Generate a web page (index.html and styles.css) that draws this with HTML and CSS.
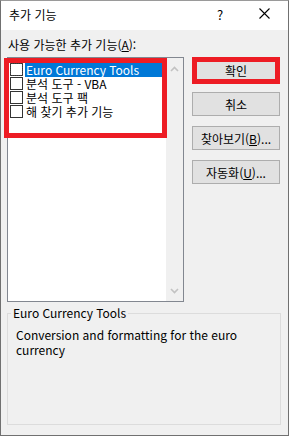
FILE: index.html
```html
<!DOCTYPE html>
<html lang="ko">
<head>
  <meta charset="UTF-8">
  <title>추가 기능</title>
  <link rel="stylesheet" href="styles.css">
</head>
<body>
  <div class="window">
    <div class="titlebar">
      <span class="title">추가 기능</span>
      <span class="help">?</span>
      <svg class="close" width="11" height="11" viewBox="0 0 11 11">
        <path d="M0.5 0.5 L10.5 10.5 M10.5 0.5 L0.5 10.5" stroke="#000" stroke-width="1.1" fill="none"/>
      </svg>
    </div>

    <div class="client">
      <div class="label">사용 가능한 추가 기능(<u>A</u>):</div>

      <div class="top-row">
        <div class="listbox">
          <ul class="items">
            <li class="item selected"><span class="check focus"></span><span class="text">Euro Currency Tools</span></li>
            <li class="item"><span class="check"></span><span class="text">분석 도구 - VBA</span></li>
            <li class="item"><span class="check"></span><span class="text">분석 도구 팩</span></li>
            <li class="item"><span class="check"></span><span class="text">해 찾기 추가 기능</span></li>
          </ul>
          <div class="scrollbar">
            <svg width="9" height="6" viewBox="0 0 9 6"><path d="M1 5 L4.5 1.5 L8 5" stroke="#c2c2c2" stroke-width="1.6" fill="none"/></svg>
            <svg width="9" height="6" viewBox="0 0 9 6"><path d="M1 1 L4.5 4.5 L8 1" stroke="#c2c2c2" stroke-width="1.6" fill="none"/></svg>
          </div>
          <div class="mark mark-list"></div>
        </div>

        <div class="buttons">
          <button class="btn btn-ok">확인</button>
          <button class="btn">취소</button>
          <button class="btn">찾아보기(<u>B</u>)...</button>
          <button class="btn">자동화(<u>U</u>)...</button>
        </div>
      </div>

      <fieldset class="group">
        <legend>Euro Currency Tools</legend>
        <p class="desc">Conversion and formatting for the euro currency</p>
      </fieldset>
    </div>
  </div>
</body>
</html>
```

FILE: styles.css
```css
body {
  margin: 0;
  background: #ffffff;
  font-family: "Noto Sans CJK KR", "Noto Sans", sans-serif;
  font-size: 12px;
  color: #000000;
}
.window {
  width: 287px;
  height: 434px;
  border: 1px solid #707070;
  border-top-color: #9a9a9a;
  display: flex;
  flex-direction: column;
  background: #f0f0f0;
}
.titlebar {
  height: 29px;
  background: #ffffff;
  display: flex;
  align-items: center;
  padding-left: 8px;
}
.title {
  flex: 1;
  line-height: 16px;
  padding-bottom: 2px;
}
.help {
  font-size: 13px;
  width: 13px;
  margin-right: 29px;
  padding-bottom: 2px;
}
.close {
  margin-right: 18px;
  margin-bottom: 4px;
}
.client {
  flex: 1;
  display: flex;
  flex-direction: column;
  padding: 7px 7px 10px 6px;
}
.label {
  line-height: 16px;
  padding-left: 1px;
}
.top-row {
  display: flex;
  gap: 8px;
  margin-top: 4px;
}
.listbox {
  position: relative;
  width: 175px;
  height: 243px;
  border: 1px solid #828790;
  background: #ffffff;
  display: flex;
}
.items {
  list-style: none;
  margin: 0;
  padding: 5px 0 0 2px;
  flex: 1;
}
.item {
  height: 14px;
  display: flex;
  align-items: flex-start;
  gap: 2px;
}
.check {
  width: 11px;
  height: 11px;
  border: 1px solid #333333;
  background: #ffffff;
  flex: none;
}
.check.focus {
  outline: 1px dotted #444444;
  outline-offset: -1px;
}
.text {
  line-height: 14px;
  padding: 0 1px;
  white-space: nowrap;
}
.selected .text {
  flex: 1;
  background: #0078d7;
  color: #ffffff;
}
.scrollbar {
  width: 17px;
  background: #f0f0f0;
  display: flex;
  flex-direction: column;
  justify-content: space-between;
  align-items: center;
  padding: 8px 0 7px;
}
.mark {
  position: absolute;
  border: 5px solid #ed1c24;
}
.mark-list {
  left: -4px;
  top: 0;
  width: 153px;
  height: 70px;
}
.buttons {
  display: flex;
  flex-direction: column;
  gap: 10px;
}
.btn {
  width: 88px;
  height: 24px;
  border: 1px solid #adadad;
  background: #e1e1e1;
  font-family: inherit;
  font-size: 12px;
  color: #000000;
  padding: 0;
}
.btn-ok {
  height: 27px;
  border: 5px solid #ed1c24;
  margin-bottom: -2px;
}
.group {
  flex: 1;
  margin: 3px 0 0 0;
  border: 1px solid #dcdcdc;
  padding: 6px 8px 4px;
  width: 256px;
}
.group legend {
  padding: 0 2px;
  margin-left: -5px;
  line-height: 16px;
}
.desc {
  margin: 0;
  line-height: 15px;
}
```
